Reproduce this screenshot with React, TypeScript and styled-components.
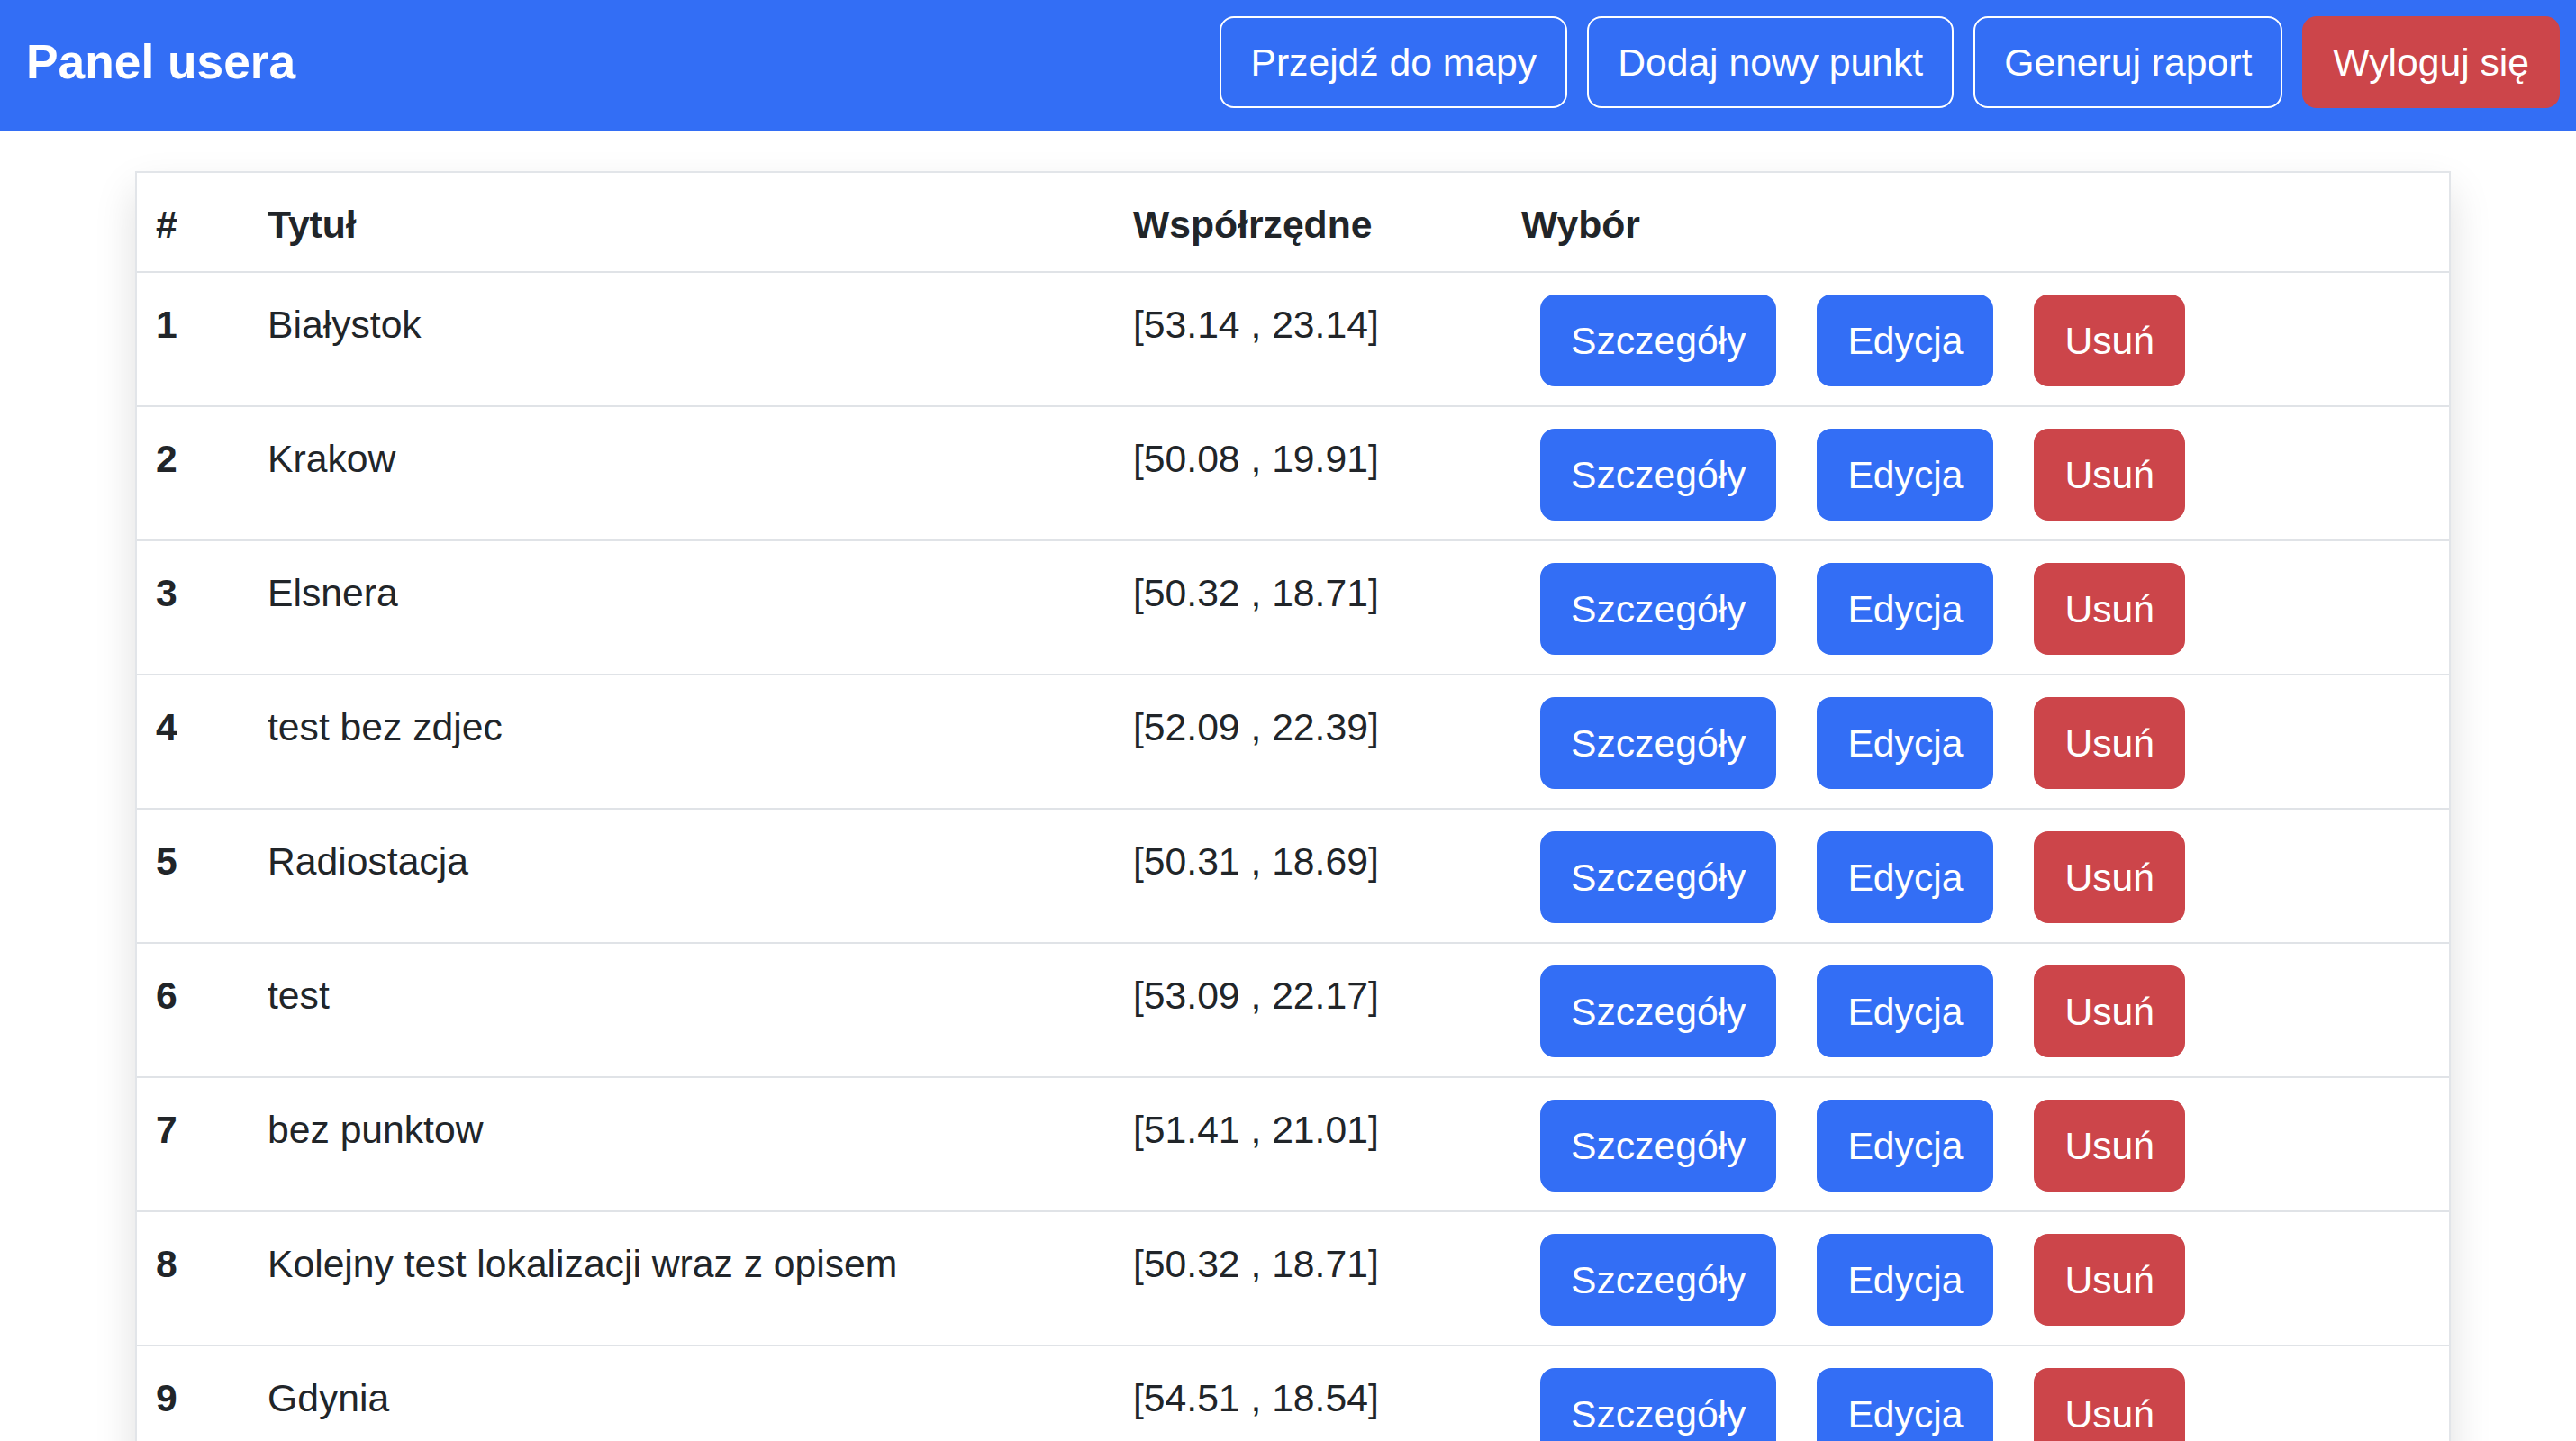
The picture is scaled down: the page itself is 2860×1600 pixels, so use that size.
import React from "react";
import styled, { createGlobalStyle } from "styled-components";

const GlobalStyle = createGlobalStyle`
  * { box-sizing: border-box; }
  html, body { margin: 0; padding: 0; background: #ffffff; }
  body {
    font-family: "Liberation Sans", Arial, Helvetica, sans-serif;
    font-size: 42.67px;
    line-height: 64px;
    color: #212529;
  }
`;

const Navbar = styled.header`
  display: flex;
  align-items: center;
  justify-content: space-between;
  height: 146px;
  padding: 18px 18px 26px 29px;
  background: #336ef5;
`;

const Brand = styled.h1`
  margin: 0;
  font-size: 53.3px;
  font-weight: 700;
  line-height: 64px;
  color: #ffffff;
`;

const NavActions = styled.nav`
  display: flex;
  align-items: center;
  gap: 22px;
`;

const NavButton = styled.button<{ $danger?: boolean }>`
  height: 102px;
  padding: 0 32px;
  font-family: inherit;
  font-size: 42.67px;
  line-height: 64px;
  color: #ffffff;
  background: ${(p) => (p.$danger ? "#cc454a" : "transparent")};
  border: 2px solid ${(p) => (p.$danger ? "#cc454a" : "#ffffff")};
  border-radius: 16px;
  white-space: nowrap;
  cursor: pointer;
`;

const Card = styled.section`
  margin: 44px 139px 0 150px;
  border: 2px solid #e2e5e9;
  background: #ffffff;
  box-shadow: 0 21px 43px rgba(0, 0, 0, 0.13);
`;

const Table = styled.table`
  width: 100%;
  border-collapse: collapse;
  table-layout: fixed;
`;

const HeadCell = styled.th`
  padding: 25px 21px 20px;
  text-align: left;
  font-weight: 700;
  line-height: 64px;
  border-bottom: 2px solid #e0e3e7;
`;

const Row = styled.tr`
  border-bottom: 2px solid #e0e3e7;
`;

const RowHead = styled.th`
  padding: 24px 21px 21px;
  text-align: left;
  vertical-align: top;
  font-weight: 700;
  line-height: 66px;
`;

const Cell = styled.td`
  padding: 24px 21px 21px;
  vertical-align: top;
  line-height: 66px;
`;

const Actions = styled.div`
  display: flex;
  align-items: center;
  gap: 45px;
  margin-left: 21px;
`;

const ActionButton = styled.button<{ $danger?: boolean }>`
  height: 102px;
  padding: 0 32px;
  font-family: inherit;
  font-size: 42.67px;
  line-height: 64px;
  color: #ffffff;
  background: ${(p) => (p.$danger ? "#cc454a" : "#336ef5")};
  border: 2px solid ${(p) => (p.$danger ? "#cc454a" : "#336ef5")};
  border-radius: 16px;
  white-space: nowrap;
  cursor: pointer;
`;

const points = [
  { id: 1, title: "Białystok", coords: "[53.14 , 23.14]" },
  { id: 2, title: "Krakow", coords: "[50.08 , 19.91]" },
  { id: 3, title: "Elsnera", coords: "[50.32 , 18.71]" },
  { id: 4, title: "test bez zdjec", coords: "[52.09 , 22.39]" },
  { id: 5, title: "Radiostacja", coords: "[50.31 , 18.69]" },
  { id: 6, title: "test", coords: "[53.09 , 22.17]" },
  { id: 7, title: "bez punktow", coords: "[51.41 , 21.01]" },
  { id: 8, title: "Kolejny test lokalizacji wraz z opisem", coords: "[50.32 , 18.71]" },
  { id: 9, title: "Gdynia", coords: "[54.51 , 18.54]" },
];

export default function App() {
  return (
    <>
      <GlobalStyle />
      <Navbar>
        <Brand>Panel usera</Brand>
        <NavActions>
          <NavButton>Przejdź do mapy</NavButton>
          <NavButton>Dodaj nowy punkt</NavButton>
          <NavButton>Generuj raport</NavButton>
          <NavButton $danger>Wyloguj się</NavButton>
        </NavActions>
      </Navbar>
      <Card>
        <Table>
          <colgroup>
            <col style={{ width: 124 }} />
            <col style={{ width: 961 }} />
            <col style={{ width: 431 }} />
            <col />
          </colgroup>
          <thead>
            <tr>
              <HeadCell>#</HeadCell>
              <HeadCell>Tytuł</HeadCell>
              <HeadCell>Współrzędne</HeadCell>
              <HeadCell>Wybór</HeadCell>
            </tr>
          </thead>
          <tbody>
            {points.map((p) => (
              <Row key={p.id}>
                <RowHead scope="row">{p.id}</RowHead>
                <Cell>{p.title}</Cell>
                <Cell>{p.coords}</Cell>
                <Cell>
                  <Actions>
                    <ActionButton>Szczegóły</ActionButton>
                    <ActionButton>Edycja</ActionButton>
                    <ActionButton $danger>Usuń</ActionButton>
                  </Actions>
                </Cell>
              </Row>
            ))}
          </tbody>
        </Table>
      </Card>
    </>
  );
}
